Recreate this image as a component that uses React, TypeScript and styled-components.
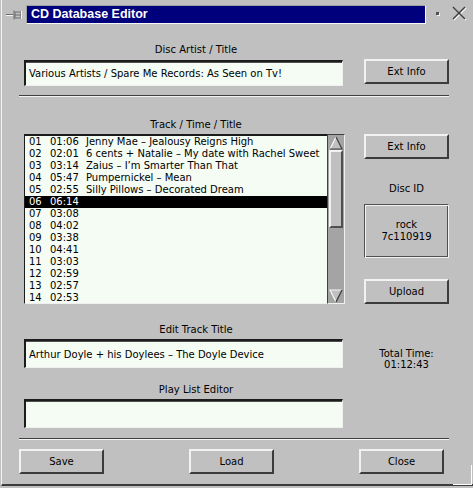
import React from 'react';
import styled, { createGlobalStyle } from 'styled-components';

const Global = createGlobalStyle`
  html, body { margin: 0; padding: 0; background: #c0c0c0; }
  body { font-family: "DejaVu Sans", "Liberation Sans", sans-serif; font-size: 10px; color: #000; }
  * { box-sizing: border-box; }
`;

const Win = styled.div`
  position: relative;
  width: 473px;
  height: 488px;
  background: #c0c0c0;
  padding-left: 1px;
`;

const Frame = styled.div`
  height: 486px;
  border-left: 1px solid #f4f4f4;
  border-bottom: 2px solid #3c3c3c;
  display: flex;
  flex-direction: column;
`;

const TitleRow = styled.div`
  display: flex;
  align-items: center;
  height: 26px;
  padding-top: 3px;
`;

const PinBox = styled.div`
  flex: 0 0 24px;
  height: 19px;
  display: flex;
  align-items: center;
  padding-left: 4px;
`;

const TitleBar = styled.div`
  flex: 0 0 400px;
  height: 19px;
  background: #00007c;
  border-top: 1px solid #a0a0a0;
  border-left: 1px solid #a0a0a0;
  border-right: 1px solid #f8f8f8;
  border-bottom: 1px solid #f8f8f8;
  color: #fff;
  font-family: "Liberation Sans", Arial, sans-serif;
  font-weight: bold;
  font-size: 12.5px;
  line-height: 17px;
  padding-left: 4px;
  white-space: nowrap;
  overflow: hidden;
`;

const TitleTools = styled.div`
  flex: 1;
  display: flex;
  align-items: center;
  padding-left: 10px;
  margin-top: -2px;
  gap: 13px;
`;

const DotMark = styled.span`
  flex: 0 0 3px;
  width: 3px;
  height: 3px;
  background: #505050;
  box-shadow: 1px 1px 0 #f4f4f4;
`;

const CloseIcon = styled.svg`
  flex: 0 0 15px;
  width: 15px;
  height: 15px;
  display: block;
  overflow: visible;
`;

const Body = styled.div`
  width: 430px;
  margin-left: 17px;
  display: flex;
  flex-direction: column;
`;

const Section = styled.div<{ $top: number }>`
  display: grid;
  grid-template-columns: 319px 85px;
  column-gap: 21px;
  padding-left: 5px;
  margin-top: ${(p) => p.$top}px;
`;

const Column = styled.div`
  display: flex;
  flex-direction: column;
`;

const Label = styled.div<{ $top?: number }>`
  height: 12px;
  line-height: 12px;
  padding-top: 1px;
  text-align: center;
  padding-left: 25px;
  margin-top: ${(p) => p.$top ?? 0}px;
  white-space: nowrap;
`;

const Field = styled.div<{ $h: number; $top: number }>`
  height: ${(p) => p.$h}px;
  margin-top: ${(p) => p.$top}px;
  background: #f4fcf4;
  border-style: solid;
  border-width: 2px 1px 1px 2px;
  border-color: #1c1c1c #f0f0f0 #f0f0f0 #1c1c1c;
  box-shadow: inset 0 1px 0 #505050;
  display: flex;
  align-items: center;
  padding-left: 3px;
  white-space: nowrap;
  overflow: hidden;
`;

const Button = styled.button<{ $top?: number }>`
  width: 85px;
  height: 25px;
  margin-top: ${(p) => p.$top ?? 0}px;
  background: #c0c0c0;
  font-family: inherit;
  font-size: 10px;
  color: #000;
  border-style: solid;
  border-width: 2px;
  border-color: #f2f2f2 #3c3c3c #3c3c3c #f2f2f2;
  padding: 0;
  cursor: default;
`;

const RightCol = styled.div<{ $top?: number }>`
  display: flex;
  flex-direction: column;
  align-items: center;
  padding-top: ${(p) => p.$top ?? 0}px;
`;

const Separator = styled.div<{ $top: number }>`
  height: 2px;
  margin-top: ${(p) => p.$top}px;
  border-top: 1px solid #404040;
  border-bottom: 1px solid #f4f4f4;
`;

const ListWrap = styled.div`
  display: flex;
  height: 170px;
  margin-top: 4px;
  width: 321px;
`;

const List = styled.div`
  width: 303px;
  height: 170px;
  background: #f4fcf4;
  border-style: solid;
  border-width: 2px 0 1px 1px;
  border-color: #1c1c1c #f0f0f0 #f0f0f0 #1c1c1c;
  overflow: hidden;
`;

const Row = styled.div<{ $sel?: boolean }>`
  display: grid;
  grid-template-columns: 21px 36px 1fr;
  height: 12px;
  line-height: 12px;
  padding-left: 4px;
  white-space: nowrap;
  background: ${(p) => (p.$sel ? '#000' : 'transparent')};
  color: ${(p) => (p.$sel ? '#fff' : '#000')};
`;

const Scroll = styled.div`
  width: 18px;
  height: 170px;
  background: #a4a4a4;
  border-style: solid;
  border-width: 1px;
  border-color: #404040 #f0f0f0 #f0f0f0 #404040;
  display: flex;
  flex-direction: column;
`;

const Arrow = styled.div`
  height: 15px;
  display: flex;
  align-items: center;
  justify-content: center;
`;

const Thumb = styled.div`
  height: 78px;
  margin: 0 1px;
  background: #c0c0c0;
  border-style: solid;
  border-width: 2px;
  border-color: #f2f2f2 #505050 #505050 #f2f2f2;
`;

const Track = styled.div`
  flex: 1;
`;

const SmallText = styled.div<{ $top?: number; $lh?: number }>`
  margin-top: ${(p) => p.$top ?? 0}px;
  line-height: ${(p) => p.$lh ?? 12}px;
  text-align: center;
  white-space: nowrap;
`;

const DiscBox = styled.div`
  width: 85px;
  height: 54px;
  margin-top: 9px;
  border-style: solid;
  border-width: 1px;
  border-color: #505050 #f4f4f4 #f4f4f4 #505050;
  box-shadow: inset 1px 1px 0 #f4f4f4, inset -1px -1px 0 #505050;
  display: flex;
  flex-direction: column;
  align-items: center;
  justify-content: center;
  line-height: 12px;
`;

const ButtonBar = styled.div`
  display: flex;
  justify-content: space-between;
  width: 425px;
  margin-top: 9px;
`;

const Corner = styled.div`
  position: absolute;
  right: 1px;
  bottom: 3px;
  width: 19px;
  height: 20px;
  border-right: 1px solid #ffffff;
  border-bottom: 1px solid #ffffff;
`;

const Pin = () => (
  <svg width="16" height="10" viewBox="0 0 16 10">
    <line x1="0" y1="4.5" x2="7" y2="4.5" stroke="#6c6c6c" />
    <line x1="0" y1="5.5" x2="7" y2="5.5" stroke="#f4f4f4" />
    <rect x="7.5" y="0.5" width="1" height="9" fill="#6c6c6c" />
    <rect x="9" y="2" width="6" height="6" fill="none" stroke="#6c6c6c" />
    <line x1="9" y1="5" x2="15" y2="5" stroke="#6c6c6c" />
    <line x1="15.5" y1="1" x2="15.5" y2="9" stroke="#f4f4f4" />
  </svg>
);

const UpArrow = () => (
  <svg width="14" height="14" viewBox="0 0 14 14">
    <path d="M7 1 L13 13 L1 13 Z" fill="#c0c0c0" />
    <path d="M1 13 L7 1" stroke="#f4f4f4" strokeWidth="1.2" />
    <path d="M7 1 L13 13 L1 13" stroke="#404040" strokeWidth="1.2" fill="none" />
  </svg>
);

const DownArrow = () => (
  <svg width="14" height="14" viewBox="0 0 14 14">
    <path d="M1 1 L13 1 L7 13 Z" fill="#c0c0c0" />
    <path d="M7 13 L1 1 L13 1" stroke="#f4f4f4" strokeWidth="1.2" fill="none" />
    <path d="M13 1 L7 13" stroke="#404040" strokeWidth="1.4" />
  </svg>
);

const tracks: [string, string, string][] = [
  ['01', '01:06', 'Jenny Mae – Jealousy Reigns High'],
  ['02', '02:01', '6 cents + Natalie – My date with Rachel Sweet'],
  ['03', '03:14', 'Zaius – I’m Smarter Than That'],
  ['04', '05:47', 'Pumpernickel – Mean'],
  ['05', '02:55', 'Silly Pillows – Decorated Dream'],
  ['06', '06:14', ''],
  ['07', '03:08', ''],
  ['08', '04:02', ''],
  ['09', '03:38', ''],
  ['10', '04:41', ''],
  ['11', '03:03', ''],
  ['12', '02:59', ''],
  ['13', '02:57', ''],
  ['14', '02:53', ''],
];

export default function App() {
  return (
    <Win>
      <Global />
      <Frame>
        <TitleRow>
          <PinBox>
            <Pin />
          </PinBox>
          <TitleBar>CD Database Editor</TitleBar>
          <TitleTools>
            <DotMark />
            <CloseIcon viewBox="0 0 15 15">
              <line x1="2" y1="2" x2="14" y2="14" stroke="#f8f8f8" strokeWidth="1.2" />
              <line x1="14" y1="2" x2="2" y2="14" stroke="#f8f8f8" strokeWidth="1.2" />
              <line x1="1" y1="1" x2="13" y2="13" stroke="#404040" strokeWidth="1.5" />
              <line x1="13" y1="1" x2="1" y2="13" stroke="#404040" strokeWidth="1.5" />
            </CloseIcon>
          </TitleTools>
        </TitleRow>
        <Body>
          <Section $top={17}>
            <Column>
              <Label>Disc Artist / Title</Label>
              <Field $h={26} $top={5}>Various Artists / Spare Me Records: As Seen on Tv!</Field>
            </Column>
            <RightCol $top={16}>
              <Button>Ext Info</Button>
            </RightCol>
          </Section>
          <Separator $top={9} />
          <Section $top={21}>
            <Column>
              <Label>Track / Time / Title</Label>
              <ListWrap>
                <List>
                  {tracks.map(([n, t, title]) => (
                    <Row key={n} $sel={n === '06'}>
                      <span>{n}</span>
                      <span>{t}</span>
                      <span>{title}</span>
                    </Row>
                  ))}
                </List>
                <Scroll>
                  <Arrow>
                    <UpArrow />
                  </Arrow>
                  <Thumb />
                  <Track />
                  <Arrow>
                    <DownArrow />
                  </Arrow>
                </Scroll>
              </ListWrap>
            </Column>
            <RightCol $top={16}>
              <Button>Ext Info</Button>
              <SmallText $top={24}>Disc ID</SmallText>
              <DiscBox>
                <span>rock</span>
                <span>7c110919</span>
              </DiscBox>
              <Button $top={21}>Upload</Button>
            </RightCol>
          </Section>
          <Section $top={19}>
            <Column>
              <Label>Edit Track Title</Label>
              <Field $h={29} $top={4}>Arthur Doyle + his Doylees – The Doyle Device</Field>
              <Label $top={15}>Play List Editor</Label>
              <Field $h={29} $top={4} />
            </Column>
            <RightCol $top={25}>
              <SmallText $lh={11}>Total Time:</SmallText>
              <SmallText $lh={11}>01:12:43</SmallText>
            </RightCol>
          </Section>
          <Separator $top={10} />
          <ButtonBar>
            <Button>Save</Button>
            <Button>Load</Button>
            <Button>Close</Button>
          </ButtonBar>
        </Body>
      </Frame>
      <Corner />
    </Win>
  );
}
